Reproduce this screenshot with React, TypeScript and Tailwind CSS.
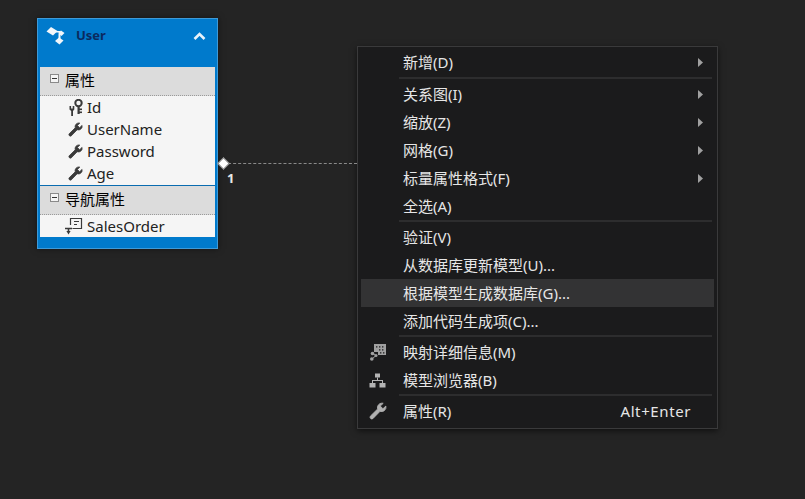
import type { ReactNode } from 'react'

const fontStack = '[font-family:"Noto_Sans","Noto_Sans_CJK_SC",sans-serif]'

function WrenchIcon({ size, color }: { size: number; color: string }) {
  return (
    <svg width={size} height={size} viewBox="0 0 16 16" fill={color} stroke={color} strokeWidth="0.8">
      <path d="M11.5 1a4 4 0 0 0-3.8 5.2L1.2 12.6a1.6 1.6 0 0 0 2.2 2.2l6.4-6.5A4 4 0 0 0 15 3.6L12.4 6 10 3.6 12.6 1.2A4 4 0 0 0 11.5 1z" />
    </svg>
  )
}

function KeyIcon() {
  return (
    <svg width="14" height="17" viewBox="0 0 14 17" fill="#3a3a3a">
      <circle cx="9.5" cy="4" r="3.2" fill="none" stroke="#3a3a3a" strokeWidth="2" />
      <rect x="8.5" y="7" width="2.2" height="8" />
      <rect x="10" y="9.5" width="3" height="1.6" />
      <rect x="10" y="12.5" width="3" height="1.6" />
      <path d="M0.5 7h1.6v2.6h1.6V7h1.6v3.4L4 12v5H2.2v-5L0.5 10.4z" />
    </svg>
  )
}

function NavIcon() {
  return (
    <svg width="19" height="18" viewBox="0 0 19 18" fill="none" stroke="#3a3a3a" strokeWidth="1.2">
      <path d="M6.5 8V1.5h11v10h-9" />
      <path d="M10 4.5h5M10 7.5h3" />
      <path d="M1 11.5h7M4.5 11.5v3" strokeWidth="1.6" />
      <path d="M2.4 14h4.2L4.5 17.5z" fill="#3a3a3a" stroke="none" />
    </svg>
  )
}

function EntityIcon() {
  return (
    <svg width="19" height="19" viewBox="0 0 19 19" fill="#f2f6fa">
      <path d="M0.5 5.5L5 1l6.5 4-4.5 4.5z" />
      <path d="M12 7l3-2.5 3.5 2.5-3 3z" />
      <path d="M9 15l4-3.5 4.5 3-4 4z" />
      <path d="M8 5h6v1.6H8zM12.5 8h2v5h-2z" />
    </svg>
  )
}

function MappingIcon() {
  return (
    <svg width="18" height="18" viewBox="0 0 18 18" fill="#a0a0a0">
      <path d="M5 1h12v11H9V9H5z" />
      <path d="M7 3.2h1.4v1.4H7zM10 3.2h1.4v1.4H10zM13 3.2h1.4v1.4H13zM10 6.2h1.4v1.4H10zM13 6.2h1.4v1.4H13zM11 9.2h1.4v1.4H11zM14 9.2h1.4v1.4H14z" fill="#1b1b1c" />
      <circle cx="3.5" cy="10.5" r="1.8" />
      <circle cx="7" cy="12.5" r="1.5" />
      <circle cx="2.8" cy="16" r="1.8" />
      <path d="M3.5 10.5l3.5 2-4 3.5" fill="none" stroke="#a0a0a0" />
    </svg>
  )
}

function TreeIcon() {
  return (
    <svg width="17" height="15" viewBox="0 0 17 15" fill="#b4b4b4">
      <rect x="6" y="0.5" width="5" height="4" />
      <rect x="0.5" y="10" width="6" height="4.5" />
      <rect x="10.5" y="10" width="6" height="4.5" />
      <path d="M8 4.5h1V7h5v3h-1V8H4v2H3V7h5z" />
    </svg>
  )
}

function SectionHeader({ title }: { title: string }) {
  return (
    <div className="flex h-[29px] items-center border-b border-dotted border-[#9a9a9a] bg-[#dcdcdc] pb-[2px] pl-[10px]">
      <span className="mb-[4px] flex h-[9px] w-[9px] items-center justify-center border border-[#8a8a8a] bg-[#f4f4f4]">
        <span className="h-px w-[5px] bg-[#333]" />
      </span>
      <span className="ml-[6px] text-[15px] text-[#000]">{title}</span>
    </div>
  )
}

function Property({ name, icon }: { name: string; icon: ReactNode }) {
  return (
    <div className="flex h-[22px] items-center">
      <span className="flex w-[47px] justify-end pr-[4px]">{icon}</span>
      <span className="text-[15px] text-[#222]">{name}</span>
    </div>
  )
}

function MenuItem({
  label,
  arrow,
  shortcut,
  icon,
  active,
}: {
  label: string
  arrow?: boolean
  shortcut?: string
  icon?: ReactNode
  active?: boolean
}) {
  return (
    <div className={`flex h-[28px] items-center ${active ? 'bg-[#333334]' : ''}`}>
      <span className="flex w-[42px] shrink-0 justify-center pr-[9px]">{icon}</span>
      <span className="text-[15px] text-[#e6e6e6]">{label}</span>
      {shortcut && (
        <span className="ml-auto mr-[23px] text-[15px] tracking-[0.6px] text-[#e6e6e6]">{shortcut}</span>
      )}
      {arrow && (
        <svg className="ml-auto mr-[11px]" width="5" height="9" viewBox="0 0 5 9" fill="#a0a0a0">
          <path d="M0 0l5 4.5L0 9z" />
        </svg>
      )}
    </div>
  )
}

function Separator({ tall }: { tall?: boolean }) {
  return <div className={`ml-[38px] mr-[2px] h-[2px] bg-[#2d2d2e] ${tall ? 'my-[1px]' : 'mb-[1px]'}`} />
}

export default function App() {
  const wrench = <WrenchIcon size={15} color="#3a3a3a" />

  return (
    <div className={`flex h-[499px] w-[805px] items-start overflow-hidden bg-[#242424] pl-[37px] pt-[18px] ${fontStack}`}>
      {/* entity */}
      <div className="w-[181px] shrink-0 border border-[#3e9ad8] bg-[#007acc] px-[2px] pb-[11px] shadow-[0_0_6px_rgba(0,0,0,0.5)]">
        <div className="flex h-[48px] items-start pt-[7px]">
          <span className="ml-[6px]"><EntityIcon /></span>
          <span className="ml-[11px] text-[13px] font-bold text-[#0b2a5e]">User</span>
          <svg className="ml-auto mr-[9px] mt-[6px]" width="13" height="8" viewBox="0 0 13 8" fill="none" stroke="#e8f2fa" strokeWidth="2.6">
            <path d="M1.5 7L6.5 2l5 5" />
          </svg>
        </div>
        <div className="bg-[#f5f5f5]">
          <SectionHeader title="属性" />
          <div className="pb-[1px]">
            <Property name="Id" icon={<KeyIcon />} />
            <Property name="UserName" icon={wrench} />
            <Property name="Password" icon={wrench} />
            <Property name="Age" icon={wrench} />
          </div>
          <div className="border-t border-[#0a6cb0]">
            <SectionHeader title="导航属性" />
          </div>
          <Property name="SalesOrder" icon={<NavIcon />} />
        </div>
      </div>

      {/* association line */}
      <div className="relative mt-[145px] h-px w-[139px] shrink-0 border-t border-dashed border-[#8a8a8a]">
        <span className="absolute left-[1px] top-[-5px] h-[9px] w-[9px] rotate-45 border border-[#777] bg-white" />
        <span className="absolute left-[9px] top-[8px] text-[13px] font-bold leading-none text-[#e8e8e8]">1</span>
      </div>

      {/* context menu */}
      <div className="mt-[28px] w-[361px] shrink-0 border border-[#3a3a3b] bg-[#1b1b1c] px-[3px] pb-[3px] pt-[1px] shadow-[0_2px_6px_rgba(0,0,0,0.55)]">
        <MenuItem label="新增(D)" arrow />
        <Separator tall />
        <MenuItem label="关系图(I)" arrow />
        <MenuItem label="缩放(Z)" arrow />
        <MenuItem label="网格(G)" arrow />
        <MenuItem label="标量属性格式(F)" arrow />
        <MenuItem label="全选(A)" />
        <Separator />
        <MenuItem label="验证(V)" />
        <MenuItem label="从数据库更新模型(U)..." />
        <MenuItem label="根据模型生成数据库(G)..." active />
        <MenuItem label="添加代码生成项(C)..." />
        <Separator />
        <MenuItem label="映射详细信息(M)" icon={<MappingIcon />} />
        <MenuItem label="模型浏览器(B)" icon={<TreeIcon />} />
        <Separator />
        <MenuItem label="属性(R)" shortcut="Alt+Enter" icon={<WrenchIcon size={18} color="#b0b0b0" />} />
      </div>
    </div>
  )
}
